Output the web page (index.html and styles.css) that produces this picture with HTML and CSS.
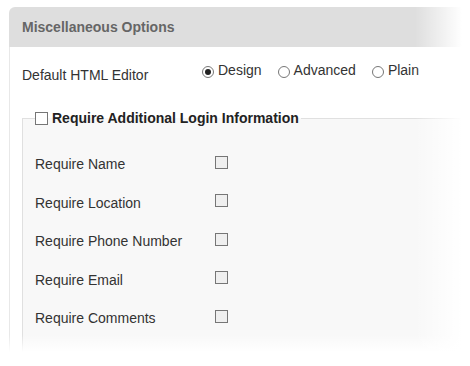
FILE: index.html
```html
<!DOCTYPE html>
<html>
<head>
<meta charset="utf-8">
<link rel="stylesheet" href="styles.css">
</head>
<body>
<div class="panel">
  <div class="panel-head">Miscellaneous Options</div>
  <div class="panel-body">
    <div class="editor-row">
      <span class="editor-label">Default HTML Editor</span>
      <label class="radio"><input type="radio" name="ed" checked>Design</label>
      <label class="radio"><input type="radio" name="ed">Advanced</label>
      <label class="radio"><input type="radio" name="ed">Plain</label>
    </div>
    <fieldset class="login">
      <legend><label class="legend-label"><input type="checkbox">Require Additional Login Information</label></legend>
      <div class="opt"><span class="opt-label">Require Name</span><input type="checkbox"></div>
      <div class="opt"><span class="opt-label">Require Location</span><input type="checkbox"></div>
      <div class="opt"><span class="opt-label">Require Phone Number</span><input type="checkbox"></div>
      <div class="opt"><span class="opt-label">Require Email</span><input type="checkbox"></div>
      <div class="opt"><span class="opt-label">Require Comments</span><input type="checkbox"></div>
    </fieldset>
  </div>
</div>
<div class="fade"></div>
</body>
</html>
```
FILE: styles.css
```css
html, body {
  margin: 0;
  padding: 0;
  background: #fff;
  width: 470px;
  height: 366px;
  overflow: hidden;
  font-family: "Liberation Sans", Arial, sans-serif;
  font-size: 14px;
  color: #333;
}
.panel {
  margin: 7px 0 0 9px;
}
.panel-head {
  height: 40px;
  line-height: 40px;
  padding-left: 13px;
  background: #dedede;
  border-radius: 6px 0 0 0;
  font-weight: bold;
  color: #666;
}
.panel-body {
  border-left: 1px solid #e8e8e8;
  padding: 13px 0 20px 12px;
  height: 300px;
}
.editor-row {
  display: flex;
  align-items: flex-start;
  height: 50px;
}
.editor-label {
  width: 180px;
  padding-top: 7px;
}
.radio {
  display: flex;
  align-items: center;
  margin-right: 16px;
  padding-top: 2px;
}
input[type=radio] {
  appearance: none;
  -webkit-appearance: none;
  width: 12px;
  height: 12px;
  margin: 3px 4px 0 0;
  border: 1px solid #777;
  border-radius: 50%;
  background: #fff;
  box-sizing: border-box;
  position: relative;
}
input[type=radio]:checked::after {
  content: "";
  position: absolute;
  left: 2px;
  top: 2px;
  width: 6px;
  height: 6px;
  border-radius: 50%;
  background: #222;
}
input[type=checkbox] {
  appearance: none;
  -webkit-appearance: none;
  width: 13px;
  height: 13px;
  margin: 0;
  border: 1px solid #767676;
  background: #efefef;
  box-sizing: border-box;
}
fieldset.login {
  margin: 0;
  border: 1px solid #e0e0e0;
  border-right: none;
  background: #f8f8f8;
  padding: 17px 0 20px 12px;
  min-height: 220px;
}
legend {
  padding: 0 2px 0 0;
}
.legend-label {
  display: flex;
  align-items: center;
  font-weight: bold;
  color: #222;
}
.legend-label input {
  margin-right: 4px;
  background: #fff;
}
.opt {
  display: flex;
  align-items: center;
  height: 38.5px;
}
.opt-label {
  width: 180px;
  padding-top: 4px;
}
.fade {
  position: absolute;
  inset: 0;
  pointer-events: none;
  background:
    linear-gradient(to right, rgba(255,255,255,0) 415px, #fff 462px),
    linear-gradient(to bottom, rgba(255,255,255,0) 335px, #fff 352px);
}
```
